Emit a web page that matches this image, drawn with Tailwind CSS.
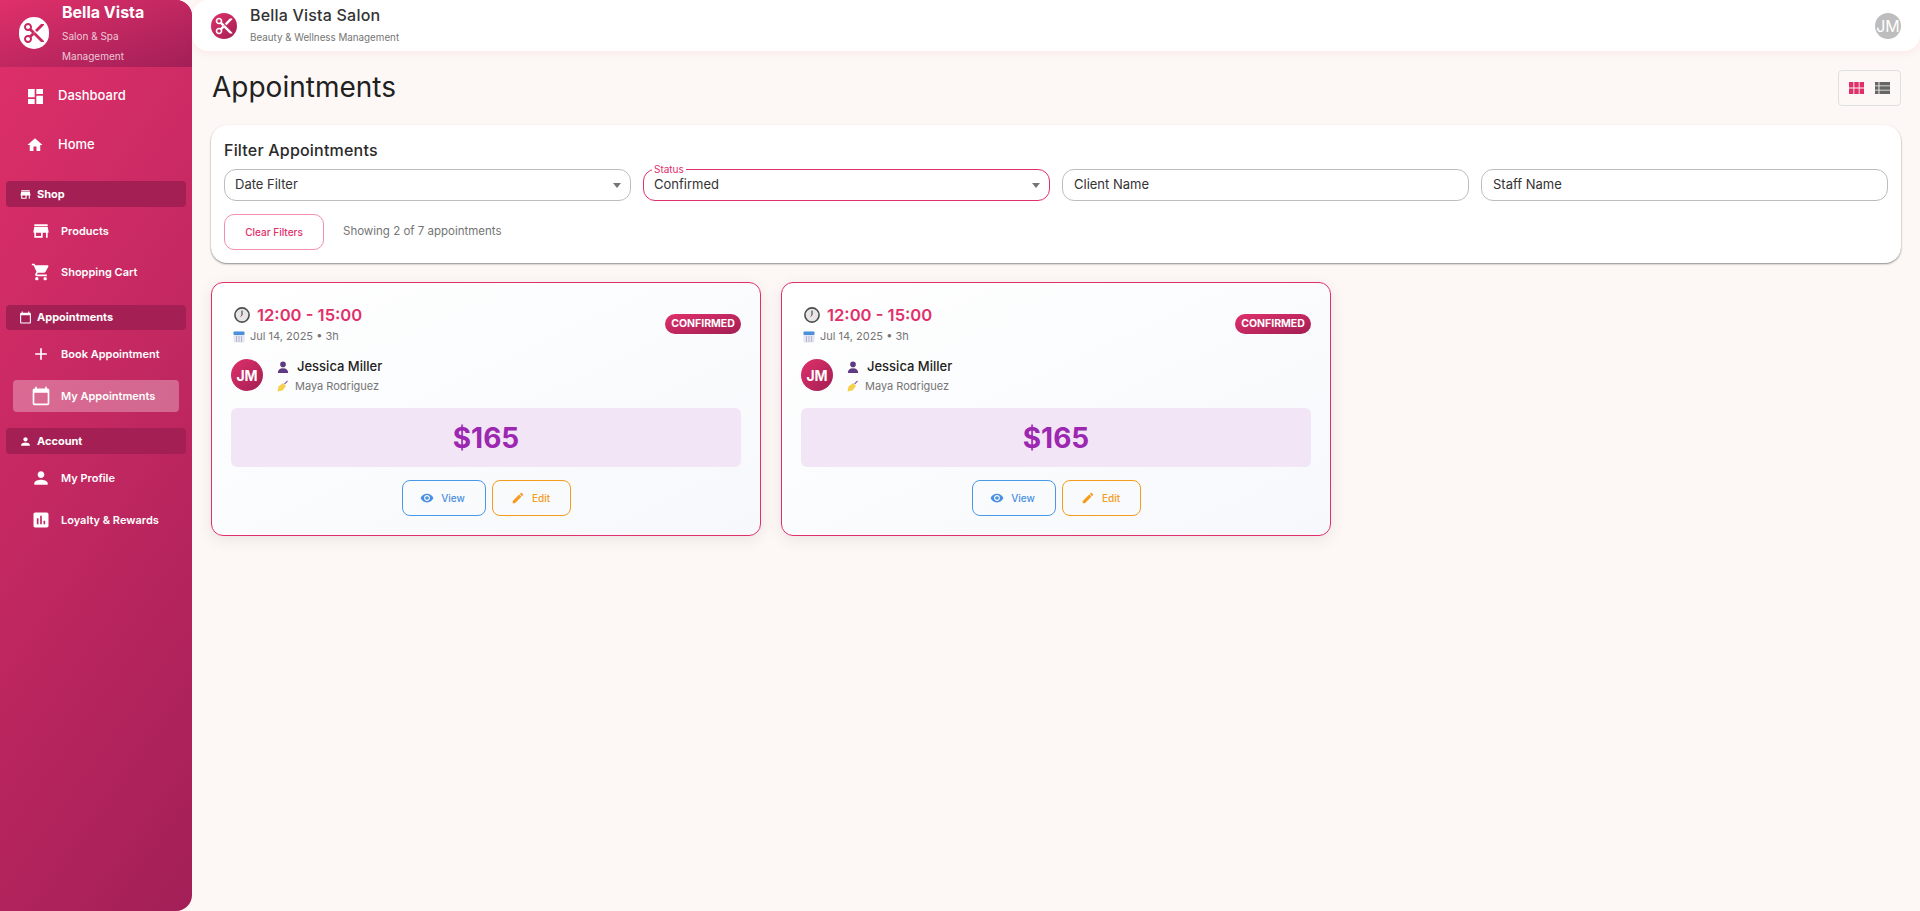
<!DOCTYPE html>
<html lang="en">
<head>
  <meta charset="UTF-8" />
  <meta name="viewport" content="width=device-width, initial-scale=1.0"/>
  <title>Bella Vista Salon</title>
  <script src="https://cdn.jsdelivr.net/npm/@tailwindcss/browser@4"></script>
</head>
<body class="bg-[#fdf8f5] text-[#212121] font-['Inter',sans-serif]">
<div class="flex h-[911px] w-[1920px] overflow-hidden">

  <!-- Sidebar -->
  <aside class="w-[192px] shrink-0 h-full rounded-r-[16px] overflow-hidden bg-[linear-gradient(125deg,#e0306a,#a31f57)] text-white">
    <div class="h-[67px] flex items-start pl-[19px] bg-gradient-to-br from-[#e0306a] to-[#a31f57]">
      <div class="w-[30px] h-[32px] mt-[17px] rounded-full bg-white flex items-center justify-center shrink-0">
        <svg class="w-[24px] h-[24px] fill-[#c9275f]" viewBox="0 0 24 24"><path d="M9.64 7.64c.23-.5.36-1.05.36-1.64 0-2.21-1.79-4-4-4S2 3.79 2 6s1.79 4 4 4c.59 0 1.14-.13 1.64-.36L10 12l-2.36 2.36C7.14 14.13 6.59 14 6 14c-2.21 0-4 1.79-4 4s1.79 4 4 4 4-1.79 4-4c0-.59-.13-1.14-.36-1.64L12 14l7 7h3v-1L9.64 7.64zM6 8c-1.1 0-2-.89-2-2s.9-2 2-2 2 .89 2 2-.9 2-2 2zm0 12c-1.1 0-2-.89-2-2s.9-2 2-2 2 .89 2 2-.9 2-2 2zm6-7.5c-.28 0-.5-.22-.5-.5s.22-.5.5-.5.5.22.5.5-.22.5-.5.5zM19 3l-6 6 2 2 7-7V3z"/></svg>
      </div>
      <div class="ml-[13px] w-[110px]">
        <div class="text-[16px] leading-[24px] font-bold">Bella Vista</div>
        <div class="text-[10px] leading-[20px] mt-[2px] text-white/75">Salon &amp; Spa Management</div>
      </div>
    </div>

    <nav class="pt-[9px]">
      <a class="flex items-center h-[40px] pl-[28px] text-[13px] font-medium">
        <svg class="w-[15px] h-[15px] fill-white" viewBox="3 3 18 18"><path d="M3 13h8V3H3v10zm0 8h8v-6H3v6zm10 0h8V11h-8v10zm0-18v6h8V3h-8z"/></svg>
        <span class="ml-[15px]">Dashboard</span>
      </a>
      <a class="flex items-center h-[40px] mt-[9px] pl-[26px] text-[13px] font-medium">
        <svg class="w-[18px] h-[18px] fill-white" viewBox="0 0 24 24"><path d="M10 20v-6h4v6h5v-8h3L12 3 2 12h3v8z"/></svg>
        <span class="ml-[14px]">Home</span>
      </a>

      <div class="mx-[6px] mt-[16px] h-[26px] rounded-[4px] bg-[#a31f54] flex items-center pl-[13px] text-[11px] font-bold">
        <svg class="w-[13px] h-[13px] fill-white" viewBox="0 0 24 24"><path d="M20 4H4v2h16V4zm1 10v-2l-1-5H4l-1 5v2h1v6h10v-6h4v6h2v-6h1zm-9 4H6v-4h6v4z"/></svg>
        <span class="ml-[5px]">Shop</span>
      </div>
      <a class="flex items-center h-[40px] mt-[4px] pl-[31px] text-[11px] font-semibold">
        <svg class="w-[20px] h-[20px] fill-white" viewBox="0 0 24 24"><path d="M20 4H4v2h16V4zm1 10v-2l-1-5H4l-1 5v2h1v6h10v-6h4v6h2v-6h1zm-9 4H6v-4h6v4z"/></svg>
        <span class="ml-[10px]">Products</span>
      </a>
      <a class="flex items-center h-[40px] mt-[1px] pl-[31px] text-[11px] font-semibold">
        <svg class="w-[20px] h-[20px] fill-white" viewBox="0 0 24 24"><path d="M7 18c-1.1 0-1.99.9-1.99 2S5.9 22 7 22s2-.9 2-2-.9-2-2-2zM1 2v2h2l3.6 7.59-1.35 2.45c-.16.28-.25.61-.25.96 0 1.1.9 2 2 2h12v-2H7.42c-.14 0-.25-.11-.25-.25l.03-.12.9-1.63h7.45c.75 0 1.41-.41 1.75-1.03l3.58-6.49c.08-.14.12-.31.12-.48 0-.55-.45-1-1-1H5.21l-.94-2H1zm16 16c-1.1 0-1.99.9-1.99 2s.89 2 1.99 2 2-.9 2-2-.9-2-2-2z"/></svg>
        <span class="ml-[10px]">Shopping Cart</span>
      </a>

      <div class="mx-[6px] mt-[13px] h-[25px] rounded-[4px] bg-[#a31f54] flex items-center pl-[13px] text-[11px] font-bold">
        <svg class="w-[13px] h-[13px] fill-white" viewBox="0 0 24 24"><path d="M20 3h-1V1h-2v2H7V1H5v2H4c-1.1 0-2 .9-2 2v16c0 1.1.9 2 2 2h16c1.1 0 2-.9 2-2V5c0-1.1-.9-2-2-2zm0 18H4V8h16v13z"/></svg>
        <span class="ml-[5px]">Appointments</span>
      </div>
      <a class="flex items-center h-[40px] mt-[4px] pl-[31px] text-[11px] font-semibold">
        <svg class="w-[20px] h-[20px] fill-white" viewBox="0 0 24 24"><path d="M19 13h-6v6h-2v-6H5v-2h6V5h2v6h6v2z"/></svg>
        <span class="ml-[10px]">Book Appointment</span>
      </a>
      <a class="flex items-center h-[32px] mx-[13px] mt-[6px] pl-[18px] rounded-[4px] bg-white/30 text-[11px] font-semibold">
        <svg class="w-[20px] h-[20px] fill-white" viewBox="0 0 24 24"><path d="M20 3h-1V1h-2v2H7V1H5v2H4c-1.1 0-2 .9-2 2v16c0 1.1.9 2 2 2h16c1.1 0 2-.9 2-2V5c0-1.1-.9-2-2-2zm0 18H4V8h16v13z"/></svg>
        <span class="ml-[10px]">My Appointments</span>
      </a>

      <div class="mx-[6px] mt-[16px] h-[26px] rounded-[4px] bg-[#a31f54] flex items-center pl-[13px] text-[11px] font-bold">
        <svg class="w-[13px] h-[13px] fill-white" viewBox="0 0 24 24"><path d="M12 12c2.21 0 4-1.79 4-4s-1.79-4-4-4-4 1.79-4 4 1.79 4 4 4zm0 2c-2.67 0-8 1.34-8 4v2h16v-2c0-2.66-5.33-4-8-4z"/></svg>
        <span class="ml-[5px]">Account</span>
      </div>
      <a class="flex items-center h-[40px] mt-[4px] pl-[31px] text-[11px] font-semibold">
        <svg class="w-[20px] h-[20px] fill-white" viewBox="0 0 24 24"><path d="M12 12c2.21 0 4-1.79 4-4s-1.79-4-4-4-4 1.79-4 4 1.79 4 4 4zm0 2c-2.67 0-8 1.34-8 4v2h16v-2c0-2.66-5.33-4-8-4z"/></svg>
        <span class="ml-[10px]">My Profile</span>
      </a>
      <a class="flex items-center h-[40px] mt-[2px] pl-[31px] text-[11px] font-semibold">
        <svg class="w-[20px] h-[20px] fill-white" viewBox="0 0 24 24"><path d="M19 3H5c-1.1 0-2 .9-2 2v14c0 1.1.9 2 2 2h14c1.1 0 2-.9 2-2V5c0-1.1-.9-2-2-2zM9 17H7v-7h2v7zm4 0h-2V7h2v10zm4 0h-2v-4h2v4z"/></svg>
        <span class="ml-[10px]">Loyalty &amp; Rewards</span>
      </a>
    </nav>
  </aside>

  <div class="flex-1 min-w-0">
    <!-- Header -->
    <header class="h-[51px] bg-white rounded-b-[16px] rounded-tl-[16px] shadow-[0_2px_8px_rgba(224,48,106,0.08)] flex items-center justify-between px-[19px]">
      <div class="flex items-center">
        <div class="w-[26px] h-[26px] rounded-full bg-gradient-to-br from-[#e0306a] to-[#a31f54] flex items-center justify-center">
          <svg class="w-[20px] h-[20px] fill-white" viewBox="0 0 24 24"><path d="M9.64 7.64c.23-.5.36-1.05.36-1.64 0-2.21-1.79-4-4-4S2 3.79 2 6s1.79 4 4 4c.59 0 1.14-.13 1.64-.36L10 12l-2.36 2.36C7.14 14.13 6.59 14 6 14c-2.21 0-4 1.79-4 4s1.79 4 4 4 4-1.79 4-4c0-.59-.13-1.14-.36-1.64L12 14l7 7h3v-1L9.64 7.64zM6 8c-1.1 0-2-.89-2-2s.9-2 2-2 2 .89 2 2-.9 2-2 2zm0 12c-1.1 0-2-.89-2-2s.9-2 2-2 2 .89 2 2-.9 2-2 2zm6-7.5c-.28 0-.5-.22-.5-.5s.22-.5.5-.5.5.22.5.5-.22.5-.5.5zM19 3l-6 6 2 2 7-7V3z"/></svg>
        </div>
        <div class="ml-[13px]">
          <div class="text-[16px] leading-[20px] font-medium tracking-[0.2px] text-[#333] -mt-[1px]">Bella Vista Salon</div>
          <div class="text-[9.8px] leading-[14px] mt-[6px] text-[#757575]">Beauty &amp; Wellness Management</div>
        </div>
      </div>
      <div class="w-[26px] h-[26px] rounded-full bg-[#bdbdbd] text-white text-[16px] flex items-center justify-center">JM</div>
    </header>

    <main class="px-[19px]">
      <div class="flex items-start justify-between h-[74px]">
        <h1 class="text-[28px] leading-[36px] mt-[18px] ml-[1px] text-[#212121]">Appointments</h1>
        <div class="mt-[19px] h-[36px] w-[63px] border border-[#e0e0e0] rounded-[4px] flex items-center justify-center gap-[11px]">
          <svg class="w-[15px] h-[12px] fill-[#e0306a]" viewBox="4 5 17 13" preserveAspectRatio="none"><path d="M4 11h5V5H4v6zm0 7h5v-6H4v6zm6 0h5v-6h-5v6zm6 0h5v-6h-5v6zm-6-7h5V5h-5v6zm6-6v6h5V5h-5z"/></svg>
          <svg class="w-[15px] h-[12px] fill-[#666]" viewBox="4 5 17 14" preserveAspectRatio="none"><path d="M4 14h4v-4H4v4zm0 5h4v-4H4v4zM4 9h4V5H4v4zm5 5h12v-4H9v4zm0 5h12v-4H9v4zM9 5v4h12V5H9z"/></svg>
        </div>
      </div>

      <!-- Filter card -->
      <section class="h-[138px] bg-white rounded-[16px] shadow-[0_1px_2px_rgba(0,0,0,0.45)] px-[13px] pt-[13px]">
        <h2 class="text-[16px] leading-[24px] font-[450] text-[#2a2a2a] tracking-[0.2px]">Filter Appointments</h2>
        <div class="grid grid-cols-4 gap-[12px] mt-[7px] text-[13px] text-[#333]">
          <div class="h-[32px] border border-[#bdbdbd] rounded-[12px] flex items-center justify-between pl-[10px] pr-[9px] pb-[1px]">
            <span>Date Filter</span>
            <span class="w-0 h-0 mt-[2px] border-x-[4px] border-x-transparent border-t-[5px] border-t-[#757575]"></span>
          </div>
          <div class="relative h-[32px] border-[1.5px] border-[#e0306a] rounded-[12px] flex items-center justify-between pl-[10px] pr-[9px] pb-[1px]">
            <span class="absolute left-[8px] -top-[7px] bg-white px-[2px] text-[10px] leading-[12px] text-[#e0306a]">Status</span>
            <span>Confirmed</span>
            <span class="w-0 h-0 mt-[2px] border-x-[4px] border-x-transparent border-t-[5px] border-t-[#757575]"></span>
          </div>
          <div class="h-[32px] border border-[#bdbdbd] rounded-[12px] flex items-center pl-[11px] pb-[1px]">Client Name</div>
          <div class="h-[32px] border border-[#bdbdbd] rounded-[12px] flex items-center pl-[11px] pb-[1px]">Staff Name</div>
        </div>
        <div class="flex items-center mt-[13px]">
          <button class="w-[100px] h-[36px] border border-[#f08fb0] rounded-[10px] text-[10px] font-medium text-[#e0306a]">Clear Filters</button>
          <span class="ml-[19px] text-[11.5px] text-[#757575]">Showing 2 of 7 appointments</span>
        </div>
      </section>

      <!-- Cards -->
      <div id="cards" class="grid grid-cols-3 gap-[20px] mt-[19px]"></div>
    </main>
  </div>
</div>

<script>
  const appointments = [
    { time: "12:00 - 15:00", date: "Jul 14, 2025", length: "3h", status: "CONFIRMED", initials: "JM", client: "Jessica Miller", staff: "Maya Rodriguez", price: "$165" },
    { time: "12:00 - 15:00", date: "Jul 14, 2025", length: "3h", status: "CONFIRMED", initials: "JM", client: "Jessica Miller", staff: "Maya Rodriguez", price: "$165" }
  ];

  document.getElementById("cards").innerHTML = appointments.map(a => `
    <article class="h-[254px] rounded-[12px] border-[1.5px] border-[#e0306a] bg-gradient-to-br from-white to-[#f6f8fb] shadow-[0_4px_16px_rgba(0,0,0,0.08)] px-[19px] pt-[20px]">
      <div class="flex items-center justify-between">
        <div>
          <div class="flex items-center h-[24px]">
            <svg class="w-[16px] h-[16px] ml-[3px]" viewBox="0 0 16 16"><circle cx="8" cy="8" r="7.1" fill="#e6e6e6" stroke="#4d4d4d" stroke-width="1.6"/><path d="M8 8V3.5" stroke="#333" stroke-width="1" fill="none"/><path d="M8 8 6.6 9.6" stroke="#b23a3a" stroke-width="1" fill="none"/></svg>
            <span class="ml-[7px] text-[16.6px] font-semibold text-[#e0306a]">${a.time}</span>
          </div>
          <div class="flex items-center h-[19px] text-[11px] text-[#757575]">
            <svg class="w-[12px] h-[12px] ml-[2px]" viewBox="0 0 12 12"><rect x="0.5" y="0.5" width="11" height="11" rx="1.5" fill="#e4e4f2"/><rect x="0.5" y="0.5" width="11" height="3.5" rx="1" fill="#4a90d9"/><path d="M3 6h1M5.5 6h1M8 6h1M3 8h1M5.5 8h1M8 8h1M3 10h1M5.5 10h1M8 10h1" stroke="#8a8aa8" stroke-width="1"/></svg>
            <span class="ml-[5px]">${a.date} • ${a.length}</span>
          </div>
        </div>
        <span class="w-[76px] h-[20px] mb-[2px] rounded-full bg-gradient-to-br from-[#e0306a] to-[#a31f54] text-white text-[10.5px] font-bold flex items-center justify-center">${a.status}</span>
      </div>
      <div class="flex items-center mt-[9px]">
        <div class="w-[32px] h-[32px] rounded-full bg-gradient-to-br from-[#e0306a] to-[#a31f54] text-white text-[14px] font-bold flex items-center justify-center">${a.initials}</div>
        <div class="ml-[14px] pt-[2px]">
          <div class="flex items-center h-[20px]">
            <svg class="w-[12px] h-[12px]" viewBox="0 0 12 12"><circle cx="6" cy="3.4" r="2.8" fill="#5e3a82"/><path d="M0.8 12c0-3.2 2-4.8 5.2-4.8s5.2 1.6 5.2 4.8z" fill="#5e3a82"/></svg>
            <span class="ml-[8px] text-[13px] font-medium text-[#212121]">${a.client}</span>
          </div>
          <div class="flex items-center h-[18px] text-[11px] text-[#757575]">
            <svg class="w-[12px] h-[12px]" viewBox="0 0 12 12"><path d="M0.5 11.5 1.5 6.5 6 3l3 3-3.5 4.5z" fill="#f5d04e"/><path d="M7.5 4l3-3" stroke="#8e6bbf" stroke-width="1.2"/></svg>
            <span class="ml-[6px]">${a.staff}</span>
          </div>
        </div>
      </div>
      <div class="h-[59px] mt-[13px] rounded-[6px] bg-[#f2e6f6] flex items-center justify-center text-[28px] font-bold text-[#9c27b0]">${a.price}</div>
      <div class="flex justify-center gap-[6px] mt-[13px]">
        <button class="w-[84px] h-[36px] pr-[2px] border border-[#4a98e8] rounded-[8px] flex items-center justify-center text-[10px] font-medium text-[#4a90e2]">
          <svg class="w-[14px] h-[14px] fill-[#4a90e2]" viewBox="0 0 24 24"><path d="M12 4.5C7 4.5 2.73 7.61 1 12c1.73 4.39 6 7.5 11 7.5s9.27-3.11 11-7.5c-1.73-4.39-6-7.5-11-7.5zM12 17c-2.76 0-5-2.24-5-5s2.24-5 5-5 5 2.24 5 5-2.24 5-5 5zm0-8c-1.66 0-3 1.34-3 3s1.34 3 3 3 3-1.34 3-3-1.34-3-3-3z"/></svg>
          <span class="ml-[7px]">View</span>
        </button>
        <button class="w-[79px] h-[36px] pr-[1px] border border-[#f59c1f] rounded-[8px] flex items-center justify-center text-[10px] font-medium text-[#f59c1f]">
          <svg class="w-[14px] h-[14px] fill-[#f59c1f]" viewBox="0 0 24 24"><path d="M3 17.25V21h3.75L17.81 9.94l-3.75-3.75L3 17.25zM20.71 7.04c.39-.39.39-1.02 0-1.41l-2.34-2.34c-.39-.39-1.02-.39-1.41 0l-1.83 1.83 3.75 3.75 1.83-1.83z"/></svg>
          <span class="ml-[7px]">Edit</span>
        </button>
      </div>
    </article>`).join("");
</script>
</body>
</html>
